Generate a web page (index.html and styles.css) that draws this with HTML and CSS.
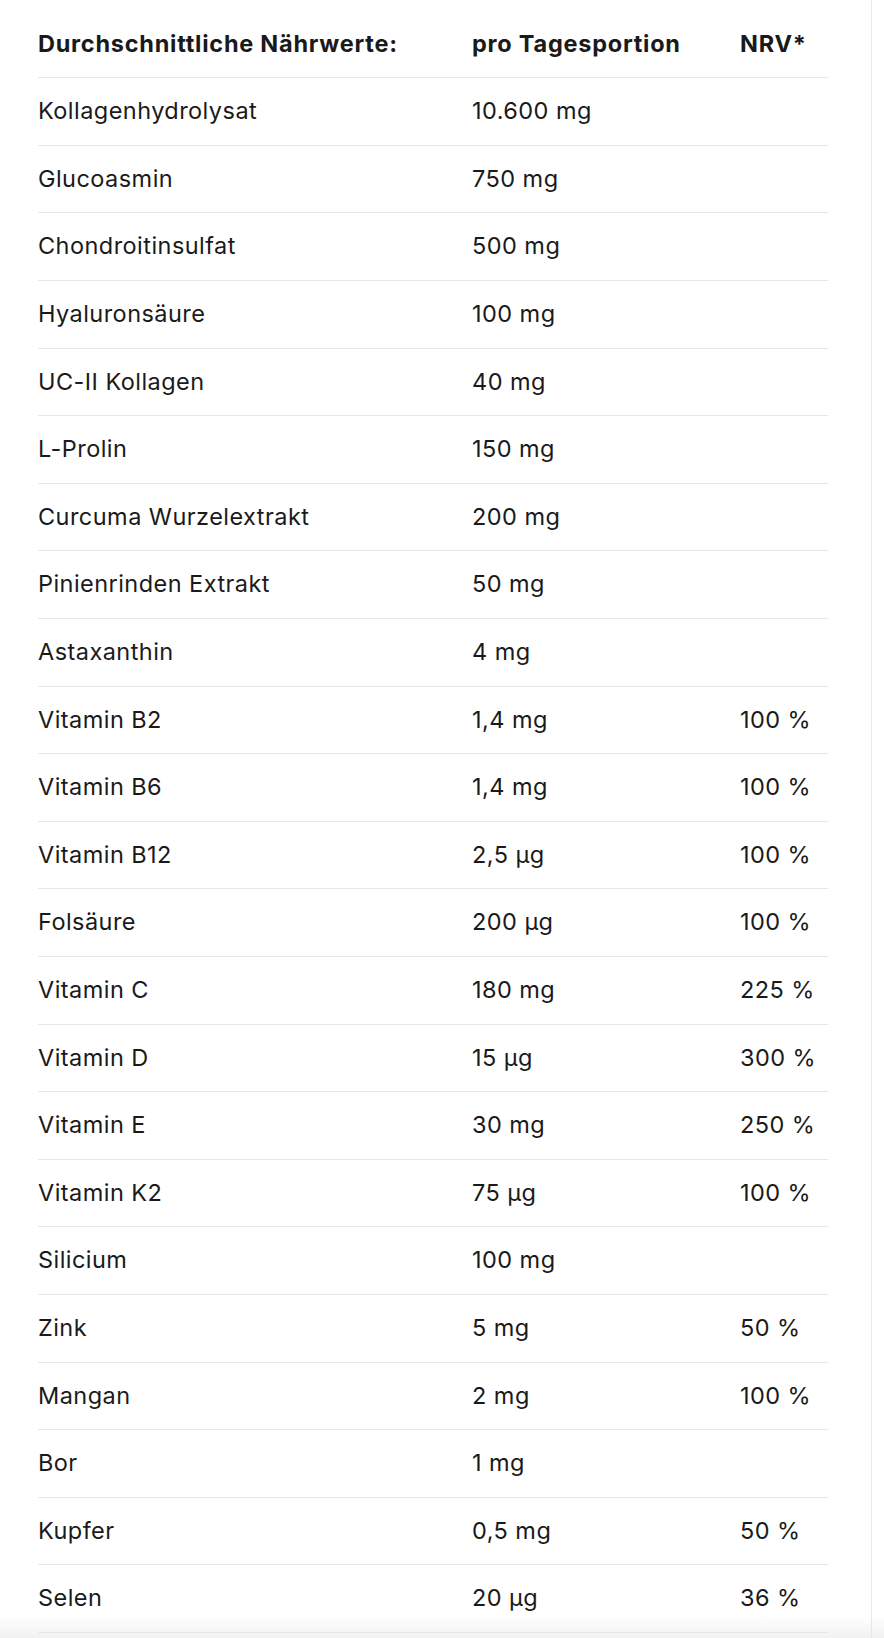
FILE: index.html
```html
<!DOCTYPE html>
<html lang="de">
<head>
<meta charset="utf-8">
<title>Nährwerte</title>
<link rel="stylesheet" href="styles.css">
</head>
<body>
<div class="panel">
  <div class="table">
    <div class="row head">
      <div class="cell">Durchschnittliche Nährwerte:</div>
      <div class="cell">pro Tagesportion</div>
      <div class="cell">NRV*</div>
    </div>
    <div class="row"><div class="cell">Kollagenhydrolysat</div><div class="cell">10.600 mg</div><div class="cell"></div></div>
    <div class="row"><div class="cell">Glucoasmin</div><div class="cell">750 mg</div><div class="cell"></div></div>
    <div class="row"><div class="cell">Chondroitinsulfat</div><div class="cell">500 mg</div><div class="cell"></div></div>
    <div class="row"><div class="cell">Hyaluronsäure</div><div class="cell">100 mg</div><div class="cell"></div></div>
    <div class="row"><div class="cell">UC-II Kollagen</div><div class="cell">40 mg</div><div class="cell"></div></div>
    <div class="row"><div class="cell">L-Prolin</div><div class="cell">150 mg</div><div class="cell"></div></div>
    <div class="row"><div class="cell">Curcuma Wurzelextrakt</div><div class="cell">200 mg</div><div class="cell"></div></div>
    <div class="row"><div class="cell">Pinienrinden Extrakt</div><div class="cell">50 mg</div><div class="cell"></div></div>
    <div class="row"><div class="cell">Astaxanthin</div><div class="cell">4 mg</div><div class="cell"></div></div>
    <div class="row"><div class="cell">Vitamin B2</div><div class="cell">1,4 mg</div><div class="cell">100 %</div></div>
    <div class="row"><div class="cell">Vitamin B6</div><div class="cell">1,4 mg</div><div class="cell">100 %</div></div>
    <div class="row"><div class="cell">Vitamin B12</div><div class="cell">2,5 µg</div><div class="cell">100 %</div></div>
    <div class="row"><div class="cell">Folsäure</div><div class="cell">200 µg</div><div class="cell">100 %</div></div>
    <div class="row"><div class="cell">Vitamin C</div><div class="cell">180 mg</div><div class="cell">225 %</div></div>
    <div class="row"><div class="cell">Vitamin D</div><div class="cell">15 µg</div><div class="cell">300 %</div></div>
    <div class="row"><div class="cell">Vitamin E</div><div class="cell">30 mg</div><div class="cell">250 %</div></div>
    <div class="row"><div class="cell">Vitamin K2</div><div class="cell">75 µg</div><div class="cell">100 %</div></div>
    <div class="row"><div class="cell">Silicium</div><div class="cell">100 mg</div><div class="cell"></div></div>
    <div class="row"><div class="cell">Zink</div><div class="cell">5 mg</div><div class="cell">50 %</div></div>
    <div class="row"><div class="cell">Mangan</div><div class="cell">2 mg</div><div class="cell">100 %</div></div>
    <div class="row"><div class="cell">Bor</div><div class="cell">1 mg</div><div class="cell"></div></div>
    <div class="row"><div class="cell">Kupfer</div><div class="cell">0,5 mg</div><div class="cell">50 %</div></div>
    <div class="row"><div class="cell">Selen</div><div class="cell">20 µg</div><div class="cell">36 %</div></div>
  </div>
</div>
</body>
</html>
```
FILE: styles.css
```css
html, body {
  margin: 0;
  padding: 0;
}
body {
  background: linear-gradient(to bottom, #ffffff calc(100% - 22px), #f1f1f1 100%);
  min-height: 100vh;
  font-family: Inter, "Liberation Sans", sans-serif;
  color: #1a1a1a;
}
.panel {
  width: 872px;
  min-height: 100vh;
  box-sizing: border-box;
  padding: 10.7px 0 0 38px;
  border-right: 1px solid #e8e8e8;
}
.table {
  width: 790px;
}
.row {
  display: grid;
  grid-template-columns: 434px 268px 1fr;
  border-bottom: 1px solid #e6e6e6;
}
.cell {
  padding: 16px 0;
  font-size: 23.5px;
  line-height: 34.6px;
  letter-spacing: 0.45px;
  white-space: nowrap;
}
.head .cell {
  font-weight: 700;
  letter-spacing: 0.75px;
}
```
